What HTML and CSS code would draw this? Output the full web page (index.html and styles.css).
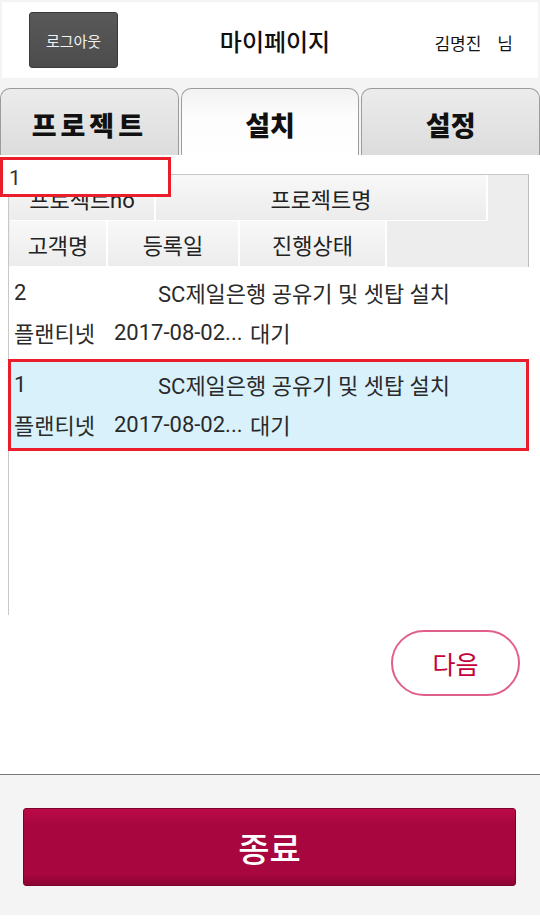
FILE: index.html
```html
<!DOCTYPE html>
<html lang="ko">
<head>
<meta charset="utf-8">
<title>마이페이지</title>
<link rel="stylesheet" href="styles.css">
</head>
<body>
<div class="page">
  <header class="topbar">
    <button class="logout">로그아웃</button>
    <h1 class="title">마이페이지</h1>
    <div class="user"><span>김명진</span><span>님</span></div>
  </header>

  <nav class="tabs">
    <div class="tab">프로젝트</div>
    <div class="tab active">설치</div>
    <div class="tab">설정</div>
  </nav>

  <main class="content">
    <div class="search-box">1</div>
    <div class="list">
      <div class="thead">
        <div class="hrow">
          <div class="hcell w-no">프로젝트no</div>
          <div class="hcell w-name">프로젝트명</div>
        </div>
        <div class="hrow">
          <div class="hcell w-cust">고객명</div>
          <div class="hcell w-date">등록일</div>
          <div class="hcell w-state">진행상태</div>
        </div>
      </div>

      <div class="row">
        <div class="line1"><span class="c-no">2</span><span>SC제일은행 공유기 및 셋탑 설치</span></div>
        <div class="line2"><span class="c-cust">플랜티넷</span><span class="c-date">2017-08-02...</span><span>대기</span></div>
      </div>
      <div class="row selected">
        <div class="line1"><span class="c-no">1</span><span>SC제일은행 공유기 및 셋탑 설치</span></div>
        <div class="line2"><span class="c-cust">플랜티넷</span><span class="c-date">2017-08-02...</span><span>대기</span></div>
      </div>
    </div>

    <div class="next-wrap">
      <button class="next">다음</button>
    </div>
  </main>

  <footer class="footer">
    <button class="quit">종료</button>
  </footer>
</div>
</body>
</html>
```

FILE: styles.css
```css
* { box-sizing: border-box; }

html, body {
  margin: 0;
  padding: 0;
  background: #fff;
}

body {
  font-family: Roboto, "Noto Sans CJK KR", sans-serif;
  color: #222;
}

.page {
  width: 540px;
  height: 915px;
  background: #f4f4f4;
  display: flex;
  flex-direction: column;
  padding-top: 2px;
}

/* header */
.topbar {
  margin: 0 2px;
  height: 76px;
  background: #fff;
  display: grid;
  grid-template-columns: 1fr auto 1fr;
  align-items: center;
  padding: 0 25px 0 27px;
}

.logout {
  justify-self: start;
  width: 89px;
  height: 56px;
  background: linear-gradient(#595959, #4c4c4c);
  border: 1px solid #3a3a3a;
  border-radius: 3px;
  color: #f2f2f2;
  font-family: "Noto Sans CJK KR", sans-serif;
  font-size: 15px;
  padding: 0;
}

.title {
  margin: 0;
  font-family: "Noto Sans CJK KR", sans-serif;
  font-weight: 500;
  font-size: 24px;
  color: #111;
  padding-left: 8px;
}

.user {
  justify-self: end;
  font-family: "Noto Sans CJK KR", sans-serif;
  font-size: 17px;
  color: #111;
  display: flex;
  gap: 16px;
  padding-top: 4px;
}

/* tabs */
.tabs {
  margin-top: 10px;
  display: flex;
  gap: 2px;
  height: 67px;
}

.tab {
  flex: 1;
  border: 1px solid #9c9c9c;
  border-bottom: none;
  border-radius: 10px 10px 0 0;
  background: linear-gradient(#ececec, #dcdcdc);
  display: flex;
  align-items: center;
  justify-content: center;
  font-family: "Noto Sans CJK KR", sans-serif;
  font-weight: 900;
  font-size: 27px;
  color: #111;
  padding-top: 4px;
}

.tab.active {
  background: linear-gradient(#f2f2f2, #fcfcfc 40%, #fff);
}

.tab:first-child { letter-spacing: 4px; }

/* content */
.content {
  position: relative;
  background: #fff;
  height: 619px;
  padding-top: 2px;
}

.search-box {
  position: absolute;
  left: 0;
  top: 2px;
  width: 171px;
  height: 40px;
  border: 3px solid #ea1d2a;
  background: #fff;
  font-size: 21px;
  line-height: 25px;
  color: #333;
  padding: 6px 0 0 6px;
  z-index: 2;
}

.list {
  margin-left: 8px;
  width: 521px;
  height: 458px;
  border-left: 1px solid #c8c8c8;
  padding-top: 17px;
}

.thead {
  width: 520px;
  background: #ededed;
  border-top: 1px solid #c8c8c8;
  border-right: 1px solid #bdbdbd;
  padding-left: 1px;
}

.hrow {
  display: flex;
  height: 46px;
}

.hcell {
  height: 46px;
  background: linear-gradient(#f8f8f8, #ececec);
  border-right: 2px solid #fff;
  border-bottom: 1px solid #fff;
  display: flex;
  align-items: center;
  justify-content: center;
  font-family: Roboto, "Noto Sans CJK KR", sans-serif;
  font-size: 22px;
  color: #222;
  overflow: hidden;
  white-space: nowrap;
}

.w-no { width: 146px; }
.w-name { width: 332px; }
.w-cust { width: 98px; }
.w-date { width: 132px; }
.w-state { width: 147px; }

/* rows */
.row {
  width: 520px;
  border: 3px solid transparent;
  padding: 2px 0 4px 2px;
  font-family: Roboto, "Noto Sans CJK KR", sans-serif;
  font-size: 22px;
  color: #2a2a2a;
}

.row.selected {
  margin-left: -1px;
  width: 521px;
  border-color: #ea1d2a;
  background: #d8f1fb;
  padding-left: 3px;
}

.line1, .line2 {
  display: flex;
  height: 40px;
  align-items: center;
  white-space: nowrap;
}

.c-no { width: 144px; }
.c-cust { width: 100px; }
.c-date { width: 136px; }

/* next button */
.next-wrap {
  display: flex;
  justify-content: flex-end;
  padding: 15px 20px 0 0;
}

.next {
  width: 129px;
  height: 66px;
  border: 2px solid #e06089;
  border-radius: 33px;
  background: #fff;
  color: #c4003a;
  font-family: "Noto Sans CJK KR", sans-serif;
  font-size: 25px;
  padding: 0;
}

/* footer */
.footer {
  border-top: 1px solid #7a7a7a;
  background: #f4f4f4;
  flex: 1;
  padding: 33px 24px 0 23px;
}

.quit {
  width: 100%;
  height: 78px;
  border: 1px solid #7a0028;
  border-radius: 3px;
  background: linear-gradient(#bb0a48, #a8063f 20%, #a8063f 85%, #8e0434);
  color: #fff;
  font-family: "Noto Sans CJK KR", sans-serif;
  font-size: 34px;
  font-weight: 500;
  padding: 0;
}
```
